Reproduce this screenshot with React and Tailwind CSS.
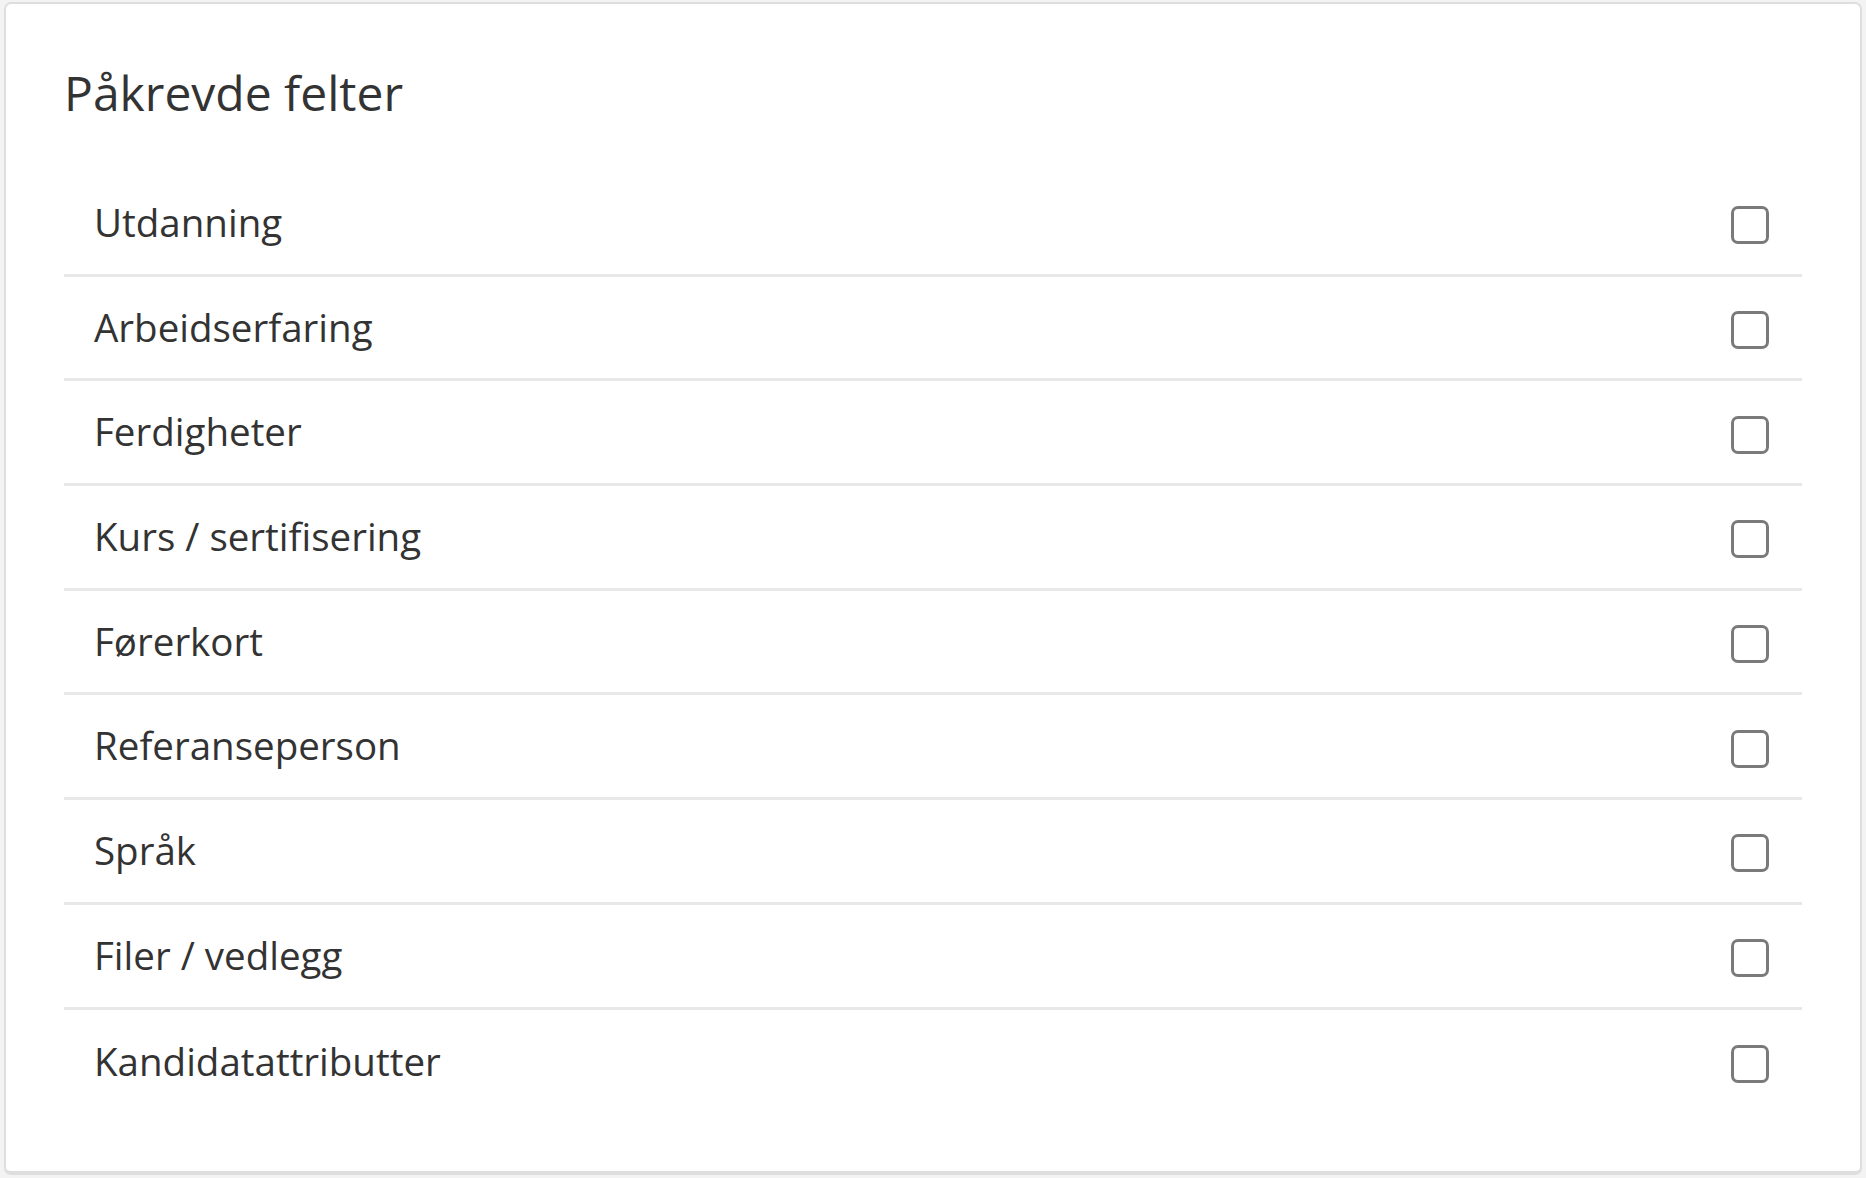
import React, { useState } from 'react';

const fields = [
  'Utdanning',
  'Arbeidserfaring',
  'Ferdigheter',
  'Kurs / sertifisering',
  'Førerkort',
  'Referanseperson',
  'Språk',
  'Filer / vedlegg',
  'Kandidatattributter',
];

const App = () => {
  const [checked, setChecked] = useState({});

  const toggle = (name) => {
    setChecked({ ...checked, [name]: !checked[name] });
  };

  return (
    <div className="w-full h-[1178px] bg-[#f3f3f3] pl-[4px] pr-[4px] pt-[2px] pb-[3px]" style={{ fontFamily: '"Open Sans", sans-serif' }}>
      <div className="h-full bg-white border-2 border-b-4 border-[#dedede] rounded-[7px] px-[58px] pt-[59px]">
        <h2 className="text-[48px] leading-[60px] text-[#333] font-normal">Påkrevde felter</h2>
        <div className="mt-[49px] flex flex-col">
          {fields.map((name, i) => (
            <div
              key={name}
              className={`h-[104.7px] flex items-center justify-between pl-[30px] pr-[33px] ${i < fields.length - 1 ? 'border-b-[3px] border-[#e8e8e8]' : ''}`}
            >
              <span className="text-[38.5px] text-[#333]">{name}</span>
              <button
                onClick={() => toggle(name)}
                className={`mt-[5px] w-[38px] h-[38px] rounded-[7px] border-[3px] border-[#7a7a7a] ${checked[name] ? 'bg-[#7a7a7a]' : 'bg-white'}`}
              />
            </div>
          ))}
        </div>
      </div>
    </div>
  );
};

export default App;
